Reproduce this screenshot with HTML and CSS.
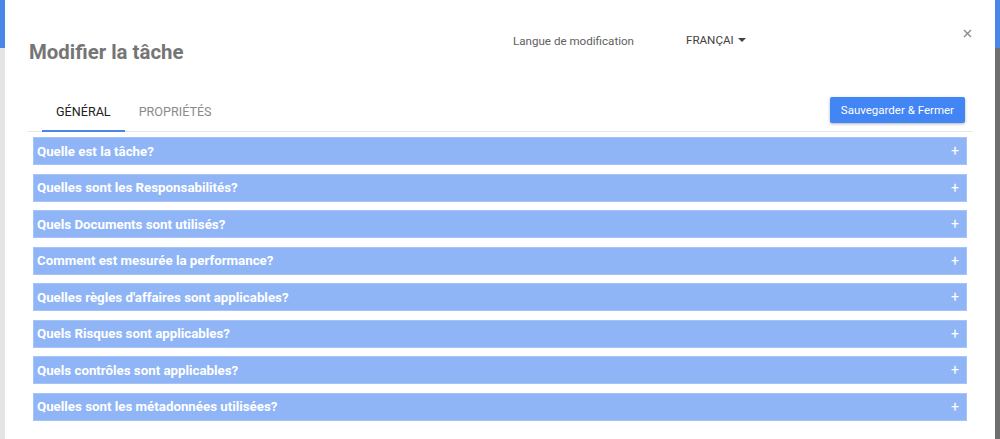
FILE: index.html
```html
<!DOCTYPE html>
<html lang="fr">
<head>
<meta charset="utf-8">
<title>Modifier la tâche</title>
<link rel="stylesheet" href="styles.css">
</head>
<body>
<div class="screen">
  <div class="gutter gutter-left"></div>
  <div class="dialog">
    <div class="dialog-header">
      <h1 class="dialog-title">Modifier la tâche</h1>
      <span class="lang-label">Langue de modification</span>
      <button class="lang-select" type="button">
        <span class="lang-value">FRANÇAIS</span>
        <svg class="caret" width="8" height="4" viewBox="0 0 8 4"><path d="M0 0h8L4 4z" fill="#424242"/></svg>
      </button>
      <button class="close" type="button" aria-label="Fermer">
        <svg width="9" height="9" viewBox="0 0 9 9"><path d="M1 1l7 7M8 1L1 8" stroke="#8a8a8a" stroke-width="1.4"/></svg>
      </button>
    </div>
    <div class="content">
      <div class="tabbar">
        <div class="tabs">
          <span class="tab tab-active">GÉNÉRAL</span>
          <span class="tab">PROPRIÉTÉS</span>
        </div>
        <button class="btn-primary" type="button">Sauvegarder &amp; Fermer</button>
      </div>
      <div class="sections">
        <div class="section"><span>Quelle est la tâche?</span><span class="plus">+</span></div>
        <div class="section"><span>Quelles sont les Responsabilités?</span><span class="plus">+</span></div>
        <div class="section"><span>Quels Documents sont utilisés?</span><span class="plus">+</span></div>
        <div class="section"><span>Comment est mesurée la performance?</span><span class="plus">+</span></div>
        <div class="section"><span>Quelles règles d'affaires sont applicables?</span><span class="plus">+</span></div>
        <div class="section"><span>Quels Risques sont applicables?</span><span class="plus">+</span></div>
        <div class="section"><span>Quels contrôles sont applicables?</span><span class="plus">+</span></div>
        <div class="section"><span>Quelles sont les métadonnées utilisées?</span><span class="plus">+</span></div>
      </div>
    </div>
  </div>
  <div class="gutter gutter-right"></div>
</div>
</body>
</html>
```
FILE: styles.css
```css
* { box-sizing: border-box; }
html, body { margin: 0; padding: 0; }
body {
  font-family: Roboto, "Liberation Sans", Arial, sans-serif;
  background: #ffffff;
  overflow: hidden;
}
.screen {
  display: flex;
  height: 439px;
  width: 1000px;
}
.gutter { width: 5px; flex: 0 0 5px; }
.gutter-left {
  background: linear-gradient(#4a86e8 0, #4a86e8 48px, #e4e4e4 48px);
}
.gutter-right {
  background: linear-gradient(#4a86e8 0, #4a86e8 48px, #6e6e6e 48px);
}
.dialog {
  flex: 0 0 990px;
  background: #fff;
  margin-top: 6px;
}
.dialog-header {
  display: flex;
  align-items: flex-start;
  padding: 0 23px 0 24px;
  height: 88px;
}
.dialog-title {
  margin: 34px 0 0 0;
  flex: 0 0 484px;
  font-size: 20.4px;
  line-height: 24px;
  font-weight: 700;
  color: #757575;
}
.lang-label {
  margin-top: 28px;
  flex: 0 0 173px;
  font-size: 11.6px;
  line-height: 14px;
  color: #616161;
}
.lang-select {
  margin-top: 27px;
  display: flex;
  align-items: center;
  gap: 4px;
  padding: 0;
  border: 0;
  background: none;
  font-family: inherit;
  font-size: 11.6px;
  line-height: 14px;
  color: #424242;
}
.lang-value {
  display: inline-block;
  width: 48px;
  overflow: hidden;
  white-space: nowrap;
}
.caret { display: block; }
.close {
  margin-left: auto;
  margin-top: 22px;
  width: 10px;
  height: 10px;
  padding: 0;
  border: 0;
  background: none;
  display: flex;
  align-items: center;
  justify-content: center;
}
.content {
  padding: 0 23px;
}
.tabbar {
  display: flex;
  align-items: center;
  justify-content: space-between;
  border-bottom: 1px solid #e6e6e6;
  padding: 0 7px 0 14px;
  height: 38px;
}
.tabs {
  display: flex;
  align-self: stretch;
}
.tab {
  display: flex;
  align-items: center;
  padding: 0 14px 2px;
  font-size: 12.6px;
  color: #8a8a8a;
  border-bottom: 2px solid transparent;
  margin-bottom: -1px;
}
.tab-active {
  color: #212121;
  border-bottom-color: #4a86e8;
}
.btn-primary {
  height: 26px;
  padding: 0 11px;
  border: 0;
  border-radius: 2px;
  background: #4285f4;
  color: #fff;
  font-family: inherit;
  font-size: 11.5px;
  box-shadow: 0 1px 3px rgba(0,0,0,0.3);
  margin-bottom: 5px;
}
.sections {
  display: flex;
  flex-direction: column;
  gap: 8.5px;
  padding: 5px 5px 0;
}
.section {
  height: 28px;
  background: #8fb5f7;
  border: 1px solid #a6c4f9;
  display: flex;
  align-items: center;
  justify-content: space-between;
  padding: 0 7px 0 3px;
  color: #fff;
  font-size: 13.3px;
  font-weight: 700;
}
.plus {
  font-weight: 400;
  font-size: 14px;
}
```
